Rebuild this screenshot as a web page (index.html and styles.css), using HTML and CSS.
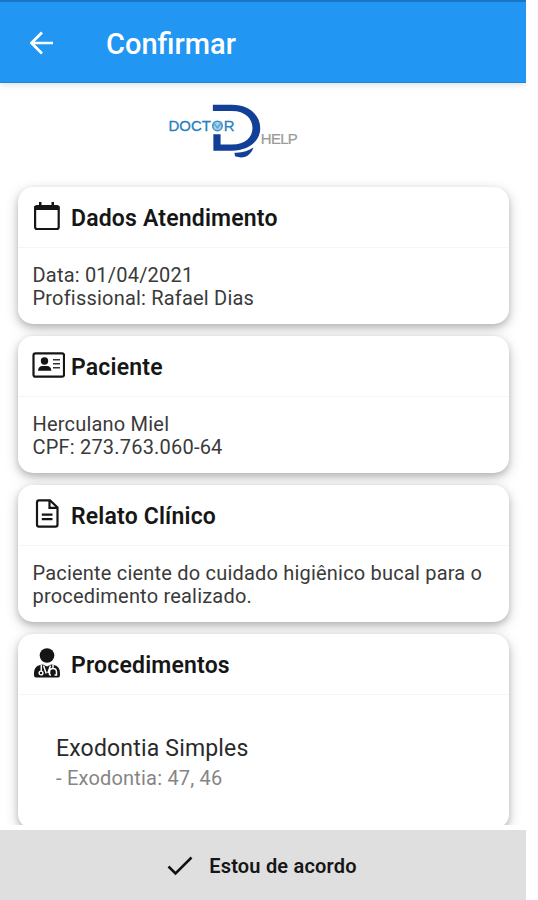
FILE: index.html
```html
<!DOCTYPE html>
<html lang="pt-BR">
<head>
    <meta charset="UTF-8">
    <meta name="viewport" content="width=device-width, initial-scale=1.0">
    <title>Confirmar</title>
    <link rel="stylesheet" href="styles.css">
</head>
<body>
    <div id="app">
        <header class="topbar">
            <svg class="back" viewBox="0 0 24 24" width="24" height="24">
                <path d="M23 12H2M12 1.500L1.500 12L12 22.500" fill="none" stroke="#fff" stroke-width="2.700"/>
            </svg>
            <h1>Confirmar</h1>
        </header>

        <main class="content">
            <div class="logo">
                <svg viewBox="0 0 134 56" width="138" height="58">
                    <path d="M45.500 4.500H64C80 4.500 91.500 14 91.500 27S80 49 64 49H46V33H53V43H64C77 43 84 36 84 27S77 10.500 64 10.500H45.500Z" fill="#123f98"/>
                    <path d="M66.500 51C74 51.500 80 49 85 46C82 54 76 57.500 67 54.500Z" fill="#123f98"/>
                    <text class="logo-doctor" x="2.500" y="29.500" textLength="41">DOCT</text>
                    <circle cx="50" cy="25" r="4.600" fill="#a6d3ec" stroke="#3b8dc5" stroke-width="1.500"/>
                    <path d="M47 23L50 27L54 21" fill="none" stroke="#5ba5d3" stroke-width="1.500"/>
                    <text class="logo-doctor" x="56" y="29.500">R</text>
                    <text class="logo-help" x="92" y="43" textLength="36">HELP</text>
                </svg>
            </div>

            <section class="card">
                <div class="card-title">
                    <svg viewBox="0 0 33 32" width="33" height="32">
                        <rect x="3.100" y="6.200" width="23.600" height="22.800" rx="2" fill="none" stroke="#151515" stroke-width="2.200"/>
                        <path d="M2.400 6H27.400V10H2.400ZM7 2H9.500V7H7ZM19.500 2H22V7H19.500Z" fill="#151515"/>
                    </svg>
                    <h2>Dados Atendimento</h2>
                </div>
                <div class="card-body">
                    <p>Data: 01/04/2021</p>
                    <p>Profissional: Rafael Dias</p>
                </div>
            </section>

            <section class="card">
                <div class="card-title">
                    <svg viewBox="0 0 33 32" width="33" height="32">
                        <rect x="1.500" y="4.300" width="30.500" height="23.400" rx="2" fill="none" stroke="#151515" stroke-width="2.200"/>
                        <circle cx="12.500" cy="12" r="3.700" fill="#151515"/>
                        <path d="M6 21.800C6 18.500 8 17 10.500 17H15C17.500 17 19.300 18.500 19.300 21.800Z" fill="#151515"/>
                        <path d="M21 10.800H28M21 14.800H28M21 18.800H28" stroke="#333" stroke-width="1.600"/>
                    </svg>
                    <h2>Paciente</h2>
                </div>
                <div class="card-body">
                    <p>Herculano Miel</p>
                    <p>CPF: 273.763.060-64</p>
                </div>
            </section>

            <section class="card">
                <div class="card-title">
                    <svg viewBox="0 0 33 32" width="33" height="32">
                        <path d="M7 2.400H18L25.500 9.400V26.500Q25.500 28.700 23.500 28.700H7Q5 28.700 5 26.500V4.500Q5 2.400 7 2.400Z" fill="none" stroke="#151515" stroke-width="2.200"/>
                        <path d="M17.500 3V9.800H25M9.800 16.600H20.500M9.800 21.200H20.500" fill="none" stroke="#151515" stroke-width="2.200"/>
                    </svg>
                    <h2>Relato Clínico</h2>
                </div>
                <div class="card-body">
                    <p>Paciente ciente do cuidado higiênico bucal para o</p>
                    <p>procedimento realizado.</p>
                </div>
            </section>

            <section class="card">
                <div class="card-title">
                    <svg viewBox="0 0 33 32" width="33" height="32">
                        <circle cx="15" cy="8.500" r="7.300" fill="#151515"/>
                        <path d="M8 18L11 17.500L15 19.500L19 17.500L22 18Q28 19.500 28 26V28Q28 30.500 26 30.500H4Q2 30.500 2 28V26Q2 19.500 8 18Z" fill="#151515"/>
                        <path d="M9.300 18V24M21 18V21.500M17.500 28V25Q17.500 21.500 21 21.500T24.500 25V28H22.500M17.500 28H19M11.500 18.500L14.200 26.500M18.500 18.500L15.800 26" fill="none" stroke="#fff" stroke-width="1.500"/>
                        <circle cx="9" cy="26" r="1.900" fill="#151515" stroke="#fff" stroke-width="1.400"/>
                    </svg>
                    <h2>Procedimentos</h2>
                </div>
                <div class="procedimento">
                    <p class="item">Exodontia Simples</p>
                    <p class="detalhe">- Exodontia: 47, 46</p>
                </div>
            </section>
        </main>

        <button class="acordo" type="button">
            <svg viewBox="0 0 26 20" width="26" height="20">
                <path d="M1.500 10.500L8.500 17.500L24.500 1.500" fill="none" stroke="#111" stroke-width="2.500"/>
            </svg>
            <span>Estou de acordo</span>
        </button>
    </div>
</body>
</html>
```
FILE: styles.css
```css
*{
    box-sizing: border-box;
}
body{
    margin: 0;
    background-color: #fff;
    font-family: Roboto, sans-serif;
    color: #161616;
}
h1, h2, p{
    margin: 0;
    white-space: nowrap;
}
#app{
    width: 526px;
    height: 900px;
    display: flex;
    flex-direction: column;
    overflow: hidden;
}
.topbar{
    flex: none;
    height: 83px;
    padding: 1px 0 0 30px;
    display: flex;
    align-items: center;
    gap: 52px;
    background-color: #2196f3;
    border-top: 2px solid #1976c5;
    border-bottom: 1px solid #1c87df;
    box-shadow: 0 2px 6px rgba(0, 0, 0, 0.12);
    color: #fff;
}
h1{
    font-size: 29px;
    font-weight: 500;
    line-height: 34px;
    padding-top: 2px;
}
.content{
    height: 742px;
    flex: none;
    padding: 17px 17px 0 18px;
    overflow: hidden;
}
.logo{
    height: 87px;
    padding-left: 148px;
}
.logo svg{
    display: block;
}
.logo-doctor{
    font: 400 14.5px "Liberation Sans", sans-serif;
    fill: #2581bf;
    stroke: #2581bf;
    stroke-width: 0.3px;
}
.logo-help{
    font: 400 14.5px "Liberation Sans", sans-serif;
    fill: #9a9a9a;
    stroke: #9a9a9a;
    stroke-width: 0.2px;
}
.card{
    height: 137px;
    margin-bottom: 12px;
    background-color: #fff;
    border-radius: 15px;
    box-shadow: 0 3px 6px rgba(0, 0, 0, 0.16), 0 4px 14px rgba(0, 0, 0, 0.2);
}
.card:last-child{
    height: 195px;
}
.card-title{
    height: 61px;
    padding: 0 0 2px 14px;
    display: flex;
    align-items: center;
    gap: 6px;
    border-bottom: 1px solid #f5f5f5;
}
.card-title svg{
    flex: none;
    margin-bottom: 1px;
}
h2{
    font-size: 23px;
    font-weight: 600;
    line-height: 30px;
    letter-spacing: 0.18px;
    padding-top: 5px;
}
.card-body{
    padding: 16px 14.5px;
    font-size: 20px;
    line-height: 23px;
    letter-spacing: 0.2px;
    color: #3a3a3a;
}
.procedimento{
    padding: 39px 38px 0;
}
.item{
    font-size: 23px;
    line-height: 30px;
    letter-spacing: 0.18px;
    color: #2a2a2a;
}
.detalhe{
    font-size: 20px;
    line-height: 29px;
    letter-spacing: 0.2px;
    color: #858585;
}
.acordo{
    height: 70px;
    margin: 5px 0 0;
    padding: 2px 2px 0 0;
    display: flex;
    align-items: center;
    justify-content: center;
    gap: 16px;
    border: none;
    background-color: #dfdfdf;
    color: #161616;
    font-family: inherit;
    font-size: 20px;
    font-weight: 600;
    letter-spacing: 0.2px;
}
```
